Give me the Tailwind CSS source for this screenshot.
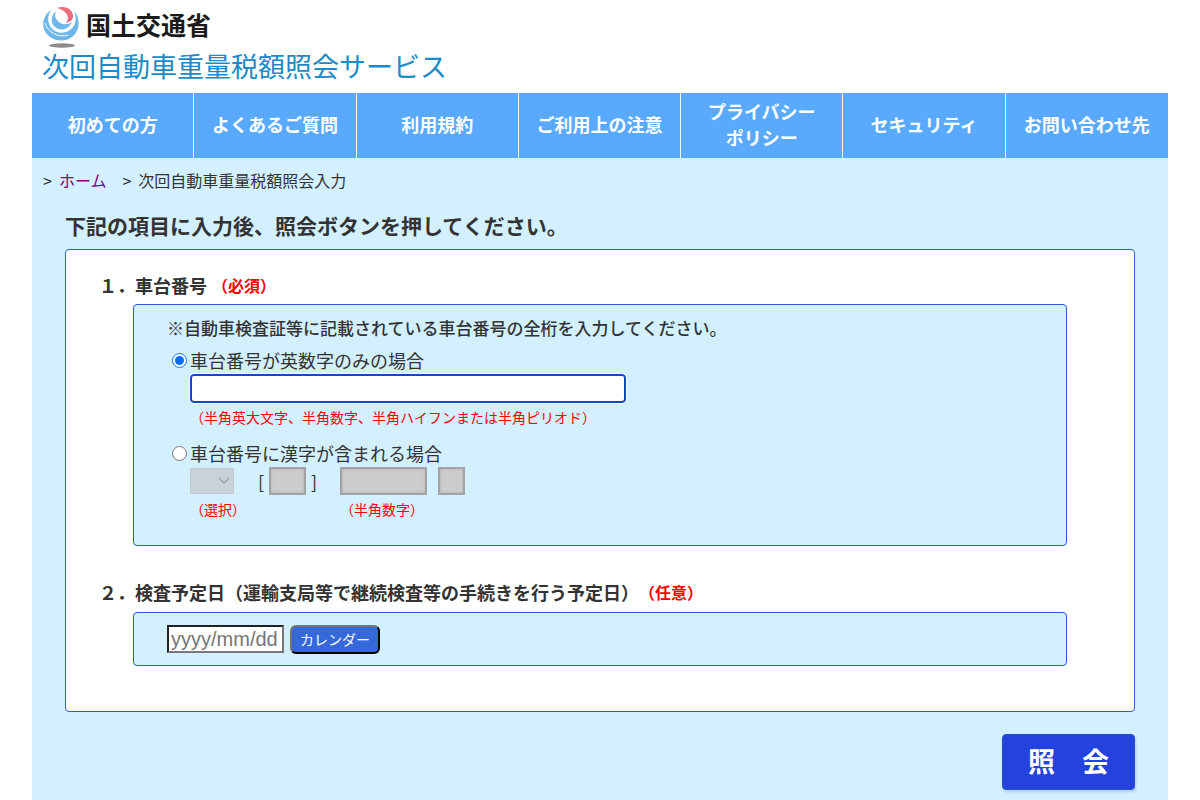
<!DOCTYPE html>
<html lang="ja">
<head>
<meta charset="utf-8">
<meta name="viewport" content="width=device-width, initial-scale=1">
<title>次回自動車重量税額照会サービス</title>
<script src="https://cdn.jsdelivr.net/npm/@tailwindcss/browser@4"></script>
</head>
<body class="flex min-h-screen flex-col bg-white px-8 font-['Noto_Sans_CJK_JP',sans-serif] text-[#333]">
<header class="h-[93px] px-[10px] pt-[6px]">
  <div class="flex items-center gap-[6px]">
    <svg class="h-[42px] w-[38px]" viewBox="0 0 38 42" aria-hidden="true">
      <ellipse cx="20" cy="39.500" rx="13" ry="2.200" fill="#8c8c8c"/>
      <path d="M9 4C1 9 -1 20 4 27C10 35 22 37 30 31C38 25 39 12 32 5C35 12 34 20 28 24C21 29 12 27 8 20C5 15 6 8 9 4Z" fill="#6db7ea"/>
      <path d="M3 17C6 27 17 32 26 29" fill="none" stroke="#fff" stroke-width="1"/>
      <path d="M14 5C9 9 8 17 13 21C19 26 27 23 30 16C26 19 20 19 17 16C13 13 12 9 14 5Z" fill="#6db7ea"/>
      <path d="M15 2C24 -1 31 4 31 10C31 14 28 16 24 17C28 12 26 5 15 2Z" fill="#ee6b7d"/>
    </svg>
    <span class="pb-[6px] text-[25px] leading-[36px] font-bold text-[#1a1a1a]">国土交通省</span>
  </div>
  <h1 class="text-[27px] leading-[35px] font-normal text-[#1b8ac6]">次回自動車重量税額照会サービス</h1>
</header>
<div class="flex-1 bg-[#d2f0ff] pb-[10px]">
  <nav class="grid h-[65px] grid-cols-7 bg-[#59aaff] text-center text-[18px] leading-[26px] font-bold text-white">
    <a href="#" class="flex items-center justify-center border-r border-[#f0f8ff] pb-[3px]">初めての方</a>
    <a href="#" class="flex items-center justify-center border-r border-[#f0f8ff] pb-[3px]">よくあるご質問</a>
    <a href="#" class="flex items-center justify-center border-r border-[#f0f8ff] pb-[3px]">利用規約</a>
    <a href="#" class="flex items-center justify-center border-r border-[#f0f8ff] pb-[3px]">ご利用上の注意</a>
    <a href="#" class="flex items-center justify-center border-r border-[#f0f8ff] pb-[3px]">プライバシー<br>ポリシー</a>
    <a href="#" class="flex items-center justify-center border-r border-[#f0f8ff] pb-[3px]">セキュリティ</a>
    <a href="#" class="flex items-center justify-center pb-[3px]">お問い合わせ先</a>
  </nav>
  <div class="flex gap-4 px-[11px] pt-[9px] text-[16px] leading-[26px]">
    <span class="flex gap-[7px]"><span>&gt;</span><a href="#" class="text-[#800080]">ホーム</a></span>
    <span class="flex gap-[7px]"><span>&gt;</span>次回自動車重量税額照会入力</span>
  </div>
  <form class="px-[33px]">
    <h2 class="pt-4 pb-[8px] text-[21px] leading-8 font-bold">下記の項目に入力後、照会ボタンを押してください。</h2>
    <div class="rounded border border-[#2f5bcf] bg-white pt-[21px] pr-[67px] pb-[45px] pl-[33px]">
      <section>
        <h3 class="flex gap-[5px] text-[18px] leading-[28px] font-bold"><label for="vin">１．車台番号</label><span class="text-[16px] text-[#f00]">（必須）</span></h3>
        <div class="mt-[5px] ml-[34px] h-[242px] rounded border border-[#2f5bcf] bg-[#d2f0ff] px-[33px] pt-[10px]">
          <p class="text-[17px] leading-[26px] font-medium">※自動車検査証等に記載されている車台番号の全桁を入力してください。</p>
          <div class="mt-[5px] flex items-center gap-[3px] pl-[5px]">
            <input type="radio" id="alnum" name="kind" checked class="size-[15px] accent-[#0a6cff]">
            <label for="alnum" class="text-[18px] leading-7">車台番号が英数字のみの場合</label>
          </div>
          <div class="pl-[23px]">
            <input id="vin" type="text" class="block h-[29px] w-[436px] rounded border-2 border-[#1149c4] bg-white px-2 outline outline-[#effaff]">
            <p class="pt-[2px] text-[14px] leading-6 text-[#f00]">（半角英大文字、半角数字、半角ハイフンまたは半角ピリオド）</p>
          </div>
          <div class="mt-[10px] flex items-center gap-[3px] pl-[5px]">
            <input type="radio" id="kanji" name="kind" class="size-[15px]">
            <label for="kanji" class="text-[18px] leading-7">車台番号に漢字が含まれる場合</label>
          </div>
          <div class="flex pl-[23px]">
            <div class="w-[150px]">
              <div class="flex h-7 items-center">
                <div class="relative mr-6">
                  <select disabled aria-label="選択" class="block h-[26px] w-11 appearance-none border border-[#bfc9ce] bg-[#c8d2d8]"><option></option></select>
                  <svg class="pointer-events-none absolute top-[9px] right-1 h-2 w-3" viewBox="0 0 12 8" fill="none" stroke="#9aa1a5" stroke-width="1.400"><path d="M1 1L6 6L11 1"/></svg>
                </div>
                <span class="text-[18px]">[</span>
                <input disabled aria-label="漢字" class="mx-[5px] h-7 w-[37px] border-2 border-[#a3a3a3] bg-[#ccc] shadow-[inset_0_0_3px_rgba(0,0,0,0.15)]">
                <span class="text-[18px]">]</span>
              </div>
              <p class="text-[14px] leading-7 text-[#f00]">（選択）</p>
            </div>
            <div>
              <div class="flex gap-[11px]">
                <input disabled aria-label="半角数字" class="h-7 w-[87px] border-2 border-[#a3a3a3] bg-[#ccc] shadow-[inset_0_0_3px_rgba(0,0,0,0.15)]">
                <input disabled aria-label="末尾" class="h-7 w-[27px] border-2 border-[#a3a3a3] bg-[#ccc] shadow-[inset_0_0_3px_rgba(0,0,0,0.15)]">
              </div>
              <p class="text-[14px] leading-7 text-[#f00]">（半角数字）</p>
            </div>
          </div>
        </div>
      </section>
      <section class="mt-8">
        <h3 class="flex text-[18px] leading-[28px] font-bold"><label for="date">２．検査予定日（運輸支局等で継続検査等の手続きを行う予定日）</label><span class="text-[16px] text-[#f00]">（任意）</span></h3>
        <div class="mt-[6px] ml-[34px] flex h-[54px] items-center gap-[6px] rounded border border-[#2f5bcf] bg-[#d2f0ff] px-[33px]">
          <input id="date" type="text" placeholder="yyyy/mm/dd" class="h-7 w-[117px] border-2 border-t-[#222] border-r-[#777] border-b-[#777] border-l-[#222] bg-white px-[2px] font-['Liberation_Sans',sans-serif] text-[20px] placeholder:text-[#757575]">
          <button type="button" class="h-[29px] w-[90px] rounded-md border-2 border-t-[#767676] border-r-black border-b-black border-l-[#767676] bg-[#3568d8] text-[14px] leading-6 text-white">カレンダー</button>
        </div>
      </section>
    </div>
    <div class="mt-[22px] flex justify-end">
      <button type="submit" class="h-14 w-[133px] rounded border border-[#2450c8] bg-[#2443de] pb-[2px] text-[27px] font-bold text-white shadow-[1px_2px_3px_rgba(0,0,0,0.15)]">照　会</button>
    </div>
  </form>
</div>
</body>
</html>
